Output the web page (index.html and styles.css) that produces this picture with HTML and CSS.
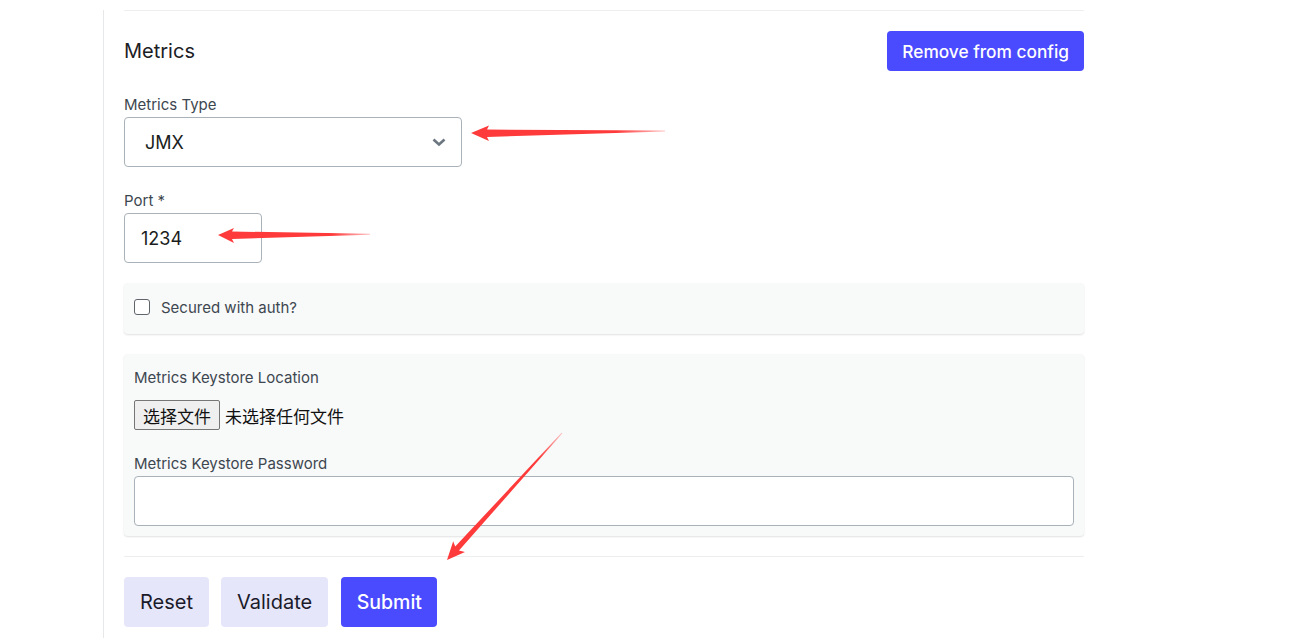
FILE: index.html
```html
<!DOCTYPE html>
<html>
<head>
<meta charset="utf-8">
<link rel="stylesheet" href="styles.css">
</head>
<body>
<div class="page">
  <div class="content">
    <div class="divider top"></div>
    <div class="header">
      <h2 class="title">Metrics</h2>
      <button class="btn primary small">Remove from config</button>
    </div>

    <div class="field">
      <label class="label">Metrics Type</label>
      <div class="select">
        <span>JMX</span>
        <svg class="chev" width="14" height="10" viewBox="0 0 14 10"><polyline points="1.5,2.5 7,7.5 12.5,2.5" fill="none" stroke="#6b7680" stroke-width="2.6"/></svg>
      </div>
    </div>

    <div class="field port">
      <label class="label">Port *</label>
      <div class="input short">1234</div>
    </div>

    <div class="card check-card">
      <span class="checkbox"></span>
      <span class="check-text">Secured with auth?</span>
    </div>

    <div class="card keystore">
      <label class="label">Metrics Keystore Location</label>
      <div class="file">
        <span class="file-btn">选择文件</span>
        <span class="file-text">未选择任何文件</span>
      </div>
      <label class="label pw-label">Metrics Keystore Password</label>
      <div class="input wide"></div>
    </div>

    <div class="divider bottom"></div>

    <div class="actions">
      <button class="btn soft">Reset</button>
      <button class="btn soft">Validate</button>
      <button class="btn primary">Submit</button>
    </div>
  </div>
</div>

<svg class="annot" width="1306" height="638" viewBox="0 0 1306 638">
  <defs>
    <linearGradient id="g1" x1="471" y1="0" x2="665" y2="0" gradientUnits="userSpaceOnUse">
      <stop offset="0.75" stop-color="#ff3a3a"/>
      <stop offset="1" stop-color="#ff3a3a" stop-opacity="0.3"/>
    </linearGradient>
    <linearGradient id="g2" x1="218" y1="0" x2="370" y2="0" gradientUnits="userSpaceOnUse">
      <stop offset="0.75" stop-color="#ff3a3a"/>
      <stop offset="1" stop-color="#ff3a3a" stop-opacity="0.3"/>
    </linearGradient>
    <linearGradient id="g3" x1="447" y1="560" x2="562" y2="433" gradientUnits="userSpaceOnUse">
      <stop offset="0.8" stop-color="#ff3a3a"/>
      <stop offset="1" stop-color="#ff3a3a" stop-opacity="0.3"/>
    </linearGradient>
  </defs>
  <polygon fill="url(#g1)" points="471,133 489,125.5 487,129.5 665,130.6 665,131.6 487,137 489,141"/>
  <polygon fill="url(#g2)" points="218,235 234,228 232,231.5 370,233.8 370,234.8 232,239 234,243"/>
  <polygon fill="url(#g3)" points="447,560 453.2,541.2 455.2,546.6 561.6,432.7 562.4,433.3 459.0,550.6 465,552"/>
</svg>
</body>
</html>
```

FILE: styles.css
```css
* { box-sizing: border-box; }

html, body {
  margin: 0;
  padding: 0;
  background: #ffffff;
  font-family: Inter, "Noto Sans", "Liberation Sans", sans-serif;
  color: #1f2328;
  overflow: hidden;
}

.page {
  margin-left: 103px;
  border-left: 1px solid #e6e8ea;
  min-height: 638px;
  padding-left: 20px;
}

.content {
  width: 960px;
}

.divider {
  border-top: 1px solid #eceef0;
}

.divider.top {
  margin-top: 10px;
}

.header {
  display: flex;
  justify-content: space-between;
  align-items: center;
  margin-top: 20px;
  height: 40px;
}

.title {
  margin: 0;
  font-size: 20px;
  font-weight: 400;
  color: #1c2024;
}

.btn {
  border: none;
  border-radius: 4px;
  font-family: Inter, "Noto Sans", "Liberation Sans", sans-serif;
  font-size: 20px;
  font-weight: 500;
  height: 50px;
  padding: 0 16px;
  cursor: pointer;
}

.btn.primary {
  background: #4a4aff;
  color: #ffffff;
}

.btn.small {
  height: 40px;
  font-size: 17.3px;
  padding: 0 15px;
}

.btn.soft {
  background: #e6e6fa;
  color: #1a1a2a;
  font-weight: 400;
}

.actions .btn.primary {
  font-size: 19.5px;
  padding: 0 15.5px;
}

.field {
  margin-top: 23px;
}

.label {
  display: block;
  font-size: 15px;
  line-height: 21px;
  color: #3d4750;
  margin-bottom: 2px;
}

.select {
  width: 338px;
  height: 50px;
  border: 1px solid #a9b2b9;
  border-radius: 4px;
  display: flex;
  align-items: center;
  justify-content: space-between;
  padding: 0 15px 0 20px;
  font-size: 18px;
  color: #1a1d20;
}

.chev {
  display: block;
}

.input {
  height: 50px;
  border: 1px solid #a9b2b9;
  border-radius: 4px;
  background: #ffffff;
  display: flex;
  align-items: center;
  padding: 0 16px;
  font-size: 18px;
  color: #1a1d20;
}

.input.short {
  width: 138px;
}

.input.wide {
  width: 100%;
}

.card {
  background: #f8f9f9;
  border-radius: 4px;
  box-shadow: 0 1px 2px rgba(0, 0, 0, 0.12);
}

.check-card {
  margin-top: 20px;
  height: 51px;
  display: flex;
  align-items: center;
  padding: 0 10px 3px 10px;
}

.checkbox {
  width: 16px;
  height: 16px;
  border: 1.5px solid #5f656b;
  border-radius: 3px;
  background: #fff;
  margin-right: 11px;
}

.check-text {
  font-size: 15px;
  color: #3d4750;
}

.keystore {
  margin-top: 20px;
  height: 182px;
  padding: 13px 10px 10px 10px;
}

.file {
  display: flex;
  align-items: center;
  margin-top: 12px;
  height: 30px;
  font-family: "Noto Sans CJK SC", "Noto Sans", sans-serif;
  font-size: 17px;
  color: #111;
}

.file-btn {
  display: inline-flex;
  align-items: center;
  justify-content: center;
  height: 30px;
  width: 86px;
  border: 1px solid #767676;
  border-radius: 2px;
  background: #efefef;
  margin-right: 5px;
}

.pw-label {
  margin-top: 23px;
}

.divider.bottom {
  margin-top: 20px;
}

.actions {
  display: flex;
  gap: 12px;
  margin-top: 20px;
}

.actions .btn.primary {
  margin-left: 1px;
}

.annot {
  position: absolute;
  left: 0;
  top: 0;
  pointer-events: none;
}
```
